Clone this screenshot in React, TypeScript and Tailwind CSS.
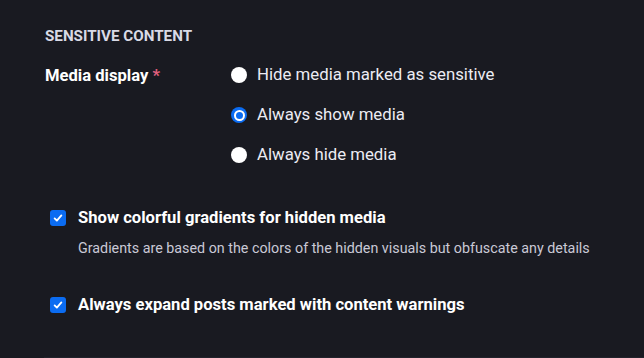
function Radio({ label, checked }: { label: string; checked?: boolean }) {
  return (
    <div className="flex items-center h-10">
      {checked ? (
        <span className="w-4 h-4 rounded-full bg-[#0b6cf2] flex items-center justify-center">
          <span className="w-[11px] h-[11px] rounded-full bg-white flex items-center justify-center">
            <span className="w-[7px] h-[7px] rounded-full bg-[#0b6cf2]" />
          </span>
        </span>
      ) : (
        <span className="w-4 h-4 rounded-full bg-white" />
      )}
      <span className="ml-[10px] text-[16.8px] text-[#ececf3]">{label}</span>
    </div>
  );
}

function Check({ label, hint }: { label: string; hint?: string }) {
  return (
    <div className="flex items-start">
      <span className="mt-[1px] w-4 h-4 rounded-[3px] bg-[#0b6cf2] flex items-center justify-center shrink-0">
        <svg viewBox="0 0 16 16" className="w-3 h-3" fill="none" stroke="white" strokeWidth="2.4" strokeLinecap="round" strokeLinejoin="round">
          <path d="M3.5 8.5l3 3 6-7" />
        </svg>
      </span>
      <div className="ml-3">
        <div className="text-[16.6px] font-bold text-white leading-[18px]">{label}</div>
        {hint && <div className="mt-[11px] text-[14.3px] text-[#c9c9d6]">{hint}</div>}
      </div>
    </div>
  );
}

export default function App() {
  return (
    <div className="w-[644px] h-[358px] bg-[#191a21] overflow-hidden font-['Roboto',sans-serif] relative">
      <div className="pl-[45px] pt-[26px]">
        <h3 className="text-[15.2px] font-bold text-[#d9dae6] leading-[20px]">SENSITIVE CONTENT</h3>
        <div className="flex mt-[16px]">
          <div className="w-[186px] text-[16.6px] font-bold text-white pt-[2px]">
            Media display <span className="text-[#e0607e]">*</span>
          </div>
          <div className="-mt-[7px]">
            <Radio label="Hide media marked as sensitive" />
            <Radio label="Always show media" checked />
            <Radio label="Always hide media" />
          </div>
        </div>
        <div className="pl-[5px] mt-[34px] flex flex-col gap-[37px]">
          <Check
            label="Show colorful gradients for hidden media"
            hint="Gradients are based on the colors of the hidden visuals but obfuscate any details"
          />
          <Check label="Always expand posts marked with content warnings" />
        </div>
      </div>
      <div className="absolute bottom-0 left-[44px] right-0 h-px bg-[#22232c]" />
    </div>
  );
}
